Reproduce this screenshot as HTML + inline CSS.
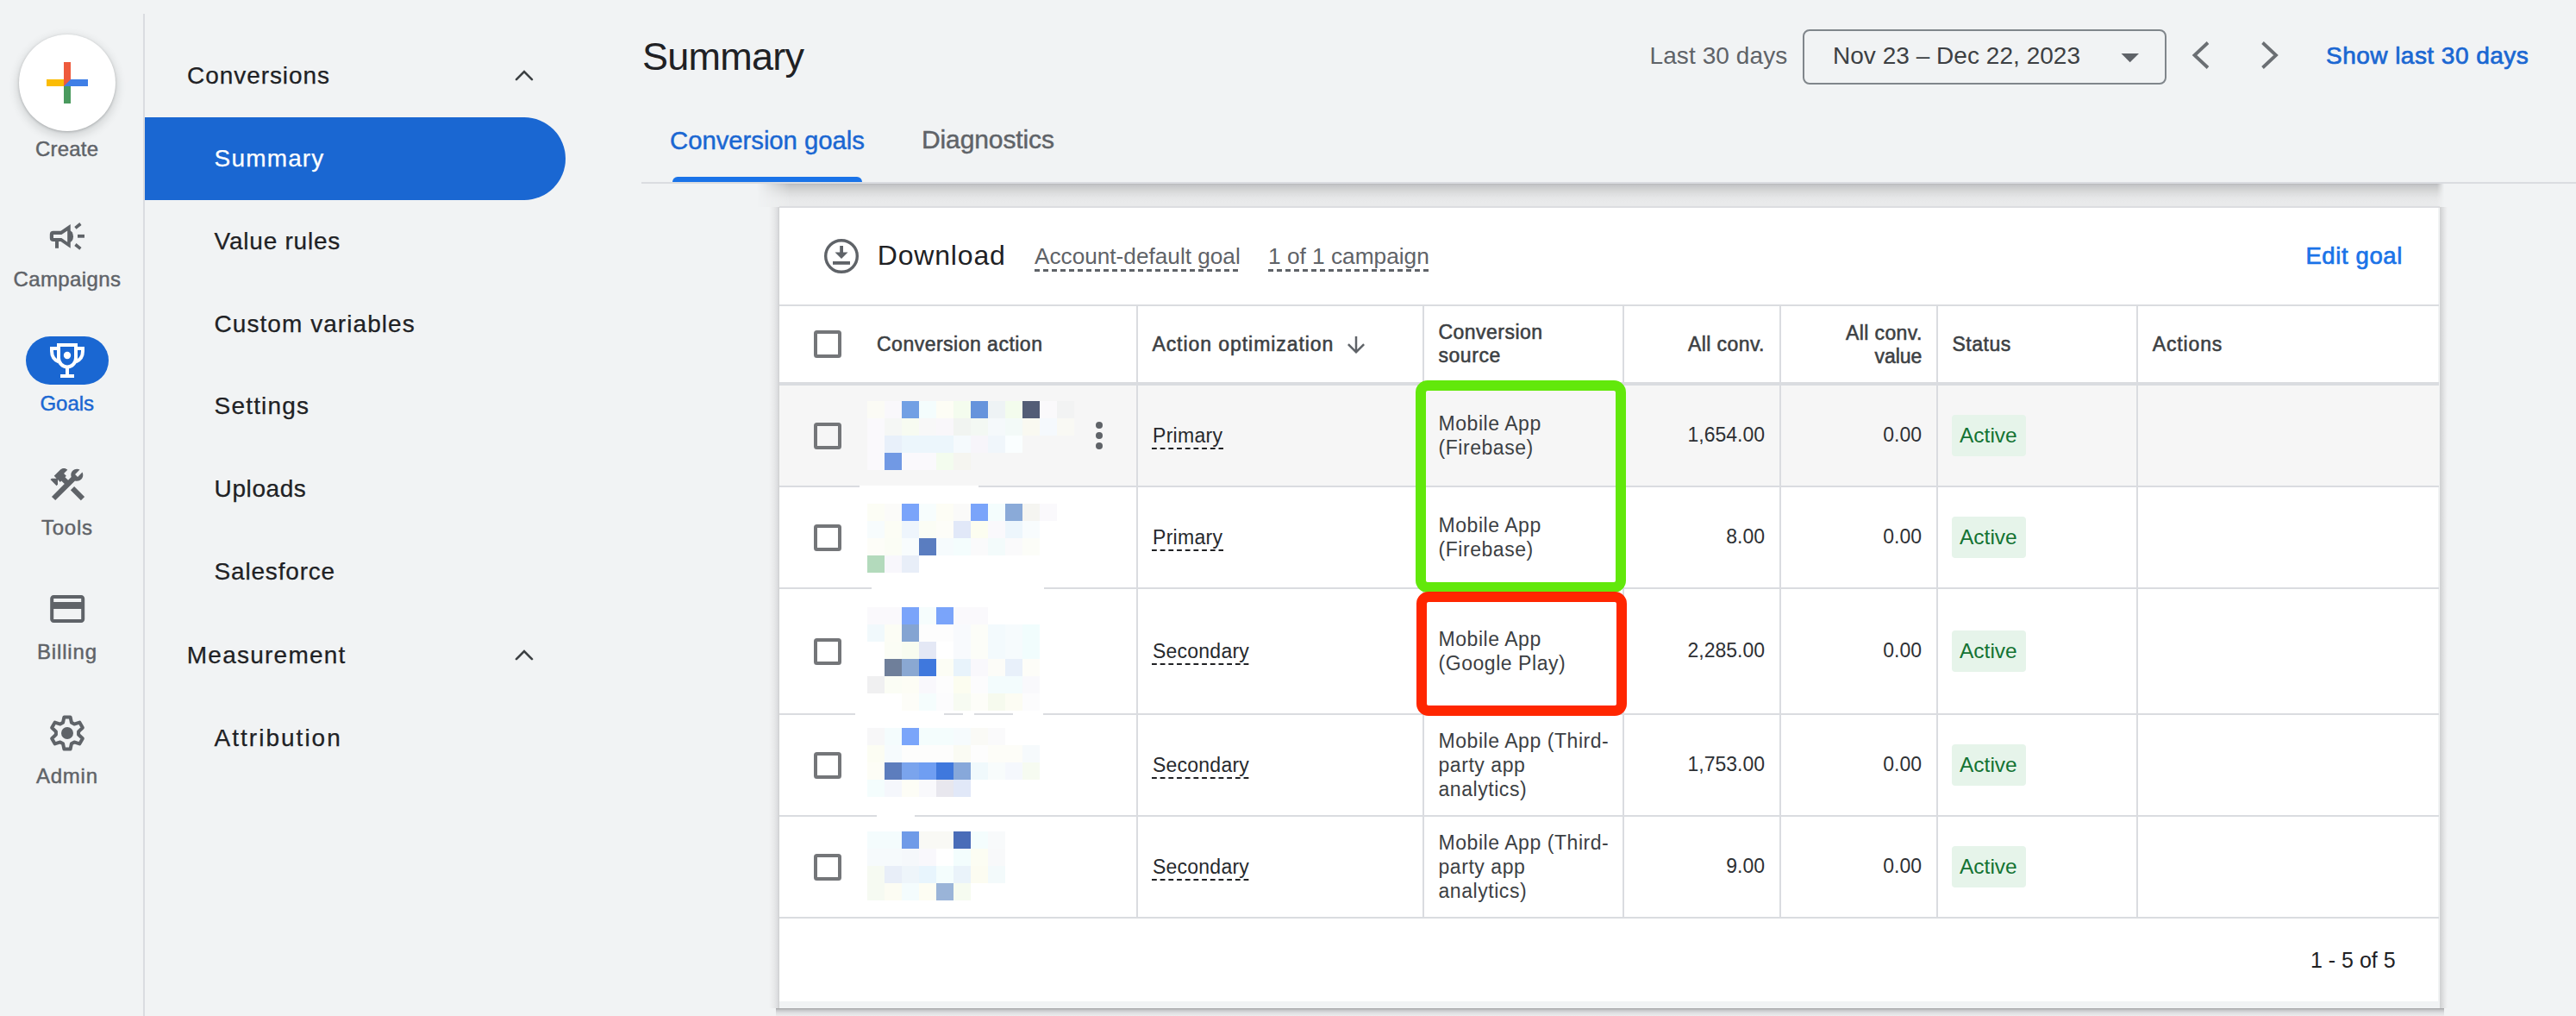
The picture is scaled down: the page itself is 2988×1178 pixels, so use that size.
<!DOCTYPE html>
<html><head><meta charset="utf-8"><style>
html,body{margin:0;padding:0;}
body{width:2988px;height:1178px;overflow:hidden;position:relative;background:#f1f3f4;font-family:"Liberation Sans",sans-serif;color:#202124;}
.t{position:absolute;white-space:nowrap;line-height:1;font-size:calc(var(--fs)*1px);top:calc(var(--b)*1px - var(--fs)*0.8465px);}
.a{position:absolute;}
.rail{color:#5f6368;--fs:24;}
.menu{--fs:28;color:#202124;}
.hd{--fs:23;color:#3c4043;-webkit-text-stroke:0.55px #3c4043;}
.cell{--fs:23;color:#3c4043;}
.num{--fs:23;color:#2d3034;}
.dash{background-image:linear-gradient(to right,#5f6368 60%,transparent 60%);background-size:10px 2px;background-repeat:repeat-x;height:2px;position:absolute;}
.vdiv{position:absolute;width:2px;background:#dadce0;}
.hdiv{position:absolute;height:2px;background:#dadce0;left:904px;width:1925px;}
.cb{position:absolute;left:944px;width:23.8px;height:23.8px;border:4px solid #747679;border-radius:3.5px;}
.chip{position:absolute;left:2264px;width:86px;height:48px;background:#e6f4ea;border-radius:4px;}
.px{position:absolute;width:20px;height:20px;}
.md{-webkit-text-stroke:0.7px currentColor;}
.sm{-webkit-text-stroke:0.45px currentColor;}
.xs{-webkit-text-stroke:0.25px currentColor;}
svg{position:absolute;overflow:visible;}
</style></head><body>
<div class="a" style="left:166px;top:16px;width:2px;height:1162px;background:#dadce0"></div>
<div class="a" style="left:22px;top:40px;width:112px;height:112px;border-radius:50%;background:#fff;box-shadow:0 1px 3px rgba(60,64,67,.3),0 4px 10px 3px rgba(60,64,67,.15)"></div>
<div class="a" style="left:74px;top:72px;width:8px;height:28px;background:#ee5a3c"></div>
<div class="a" style="left:54px;top:92px;width:20px;height:8px;background:#fbbc04"></div>
<div class="a" style="left:74px;top:100px;width:8px;height:20px;background:#4a9a5e"></div>
<div class="a" style="left:74px;top:92px;width:28px;height:8px;background:#3f7fe6;clip-path:polygon(8px 0,100% 0,100% 100%,0 100%)"></div>
<div class="t sm" style="--fs:24;--b:181.5;letter-spacing:0.19px;left:41px;color:#5f6368;">Create</div>
<div class="t sm" style="--fs:24;--b:332.4;letter-spacing:0.39px;left:15.5px;color:#5f6368;">Campaigns</div>
<div class="a" style="left:30px;top:390px;width:96px;height:56px;border-radius:28px;background:#1a67d2"></div>
<div class="t sm" style="--fs:24;--b:476;letter-spacing:-0.05px;left:46.5px;color:#1a67d2;">Goals</div>
<div class="t sm" style="--fs:24;--b:620;letter-spacing:0.74px;left:48px;color:#5f6368;">Tools</div>
<div class="t sm" style="--fs:24;--b:764.4;letter-spacing:0.83px;left:43px;color:#5f6368;">Billing</div>
<div class="t sm" style="--fs:24;--b:908;letter-spacing:0.74px;left:42px;color:#5f6368;">Admin</div>
<svg style="left:0;top:0" width="1" height="1">
<g fill="#5f6368">
 <path fill-rule="evenodd" d="M61.8 267.8 H70.5 L81.75 260.1 V287.8 L70.5 279.9 H61.8 Q57.8 279.9 57.8 275.9 V271.8 Q57.8 267.8 61.8 267.8 Z M62 271.9 V276 H71.4 L78.2 280.8 V267.5 L71.4 271.9 Z"/>
 <rect x="64" y="279" width="4" height="8.8"/>
 <path d="M80.5 267.3 A4.5 6.9 0 0 1 80.5 281.1 Z"/>
 <rect x="90" y="271.9" width="8" height="3.8"/>
 <path d="M87.4 264.3 L93.4 259.5 M87.4 283.5 L93.4 288.3" stroke="#5f6368" stroke-width="3.6" fill="none"/>
 <g transform="translate(54.3 537.8) scale(2)"><path d="M13.783 15.172l2.121-2.121 5.996 5.996-2.121 2.121zM17.5 10c1.93 0 3.5-1.57 3.5-3.5 0-.58-.16-1.120-.41-1.6l-2.7 2.7-1.49-1.490 2.7-2.7c-.48-.25-1.02-.41-1.6-.41C15.57 3 14 4.57 14 6.5c0 .41.08.8.21 1.160l-1.85 1.85-1.78-1.78.71-.71-1.41-1.41L12 3.490c-1.17-1.17-3.07-1.17-4.24 0L4.22 7.030l1.41 1.41H2.81l-.71.71 3.54 3.54.71-.71V9.150l1.41 1.41.71-.71 1.78 1.78-7.41 7.41 2.12 2.12L16.34 9.790c.36.13.75.21 1.16.21z"/></g>
 <g transform="translate(54.2 682) scale(2)"><path d="M20 4H4c-1.11 0-1.99.89-1.99 2L2 18c0 1.11.89 2 2 2h16c1.11 0 2-.89 2-2V6c0-1.11-.89-2-2-2zm0 14H4v-6h16v6zm0-10H4V6h16v2z"/></g>
 <circle cx="78" cy="850" r="7"/>
</g>
<path d="M73.06 837.76 L74.39 831.45 L81.61 831.45 L82.94 837.76 L86.13 839.60 L92.26 837.60 L95.87 843.85 L91.07 848.16 L91.07 851.84 L95.87 856.15 L92.26 862.40 L86.13 860.40 L82.94 862.24 L81.61 868.55 L74.39 868.55 L73.06 862.24 L69.87 860.40 L63.74 862.40 L60.13 856.15 L64.93 851.84 L64.93 848.16 L60.13 843.85 L63.74 837.60 L69.87 839.60 Z" fill="none" stroke="#5f6368" stroke-width="4" stroke-linejoin="round"/>
<g fill="none" stroke="#fff" stroke-width="4">
 <path d="M68 400 H88 V415 A10 10.6 0 0 1 68 415 Z"/>
 <path d="M68 404 H60 V407 Q60 416 68 419.5"/>
 <path d="M88 404 H96 V407 Q96 416 88 419.5"/>
</g>
<g fill="#fff"><rect x="76" y="426" width="4" height="9"/><rect x="70" y="434" width="16" height="4"/><circle cx="78" cy="412" r="4.2"/></g>
<g fill="none" stroke="#3c4043" stroke-width="2.6" stroke-linecap="round">
 <path d="M599 92.2 L608 83.2 L617 92.2"/>
 <path d="M599 764.2 L608 755.2 L617 764.2"/>
</g>
<g fill="none" stroke="#6b6f73" stroke-width="3.8">
 <path d="M2561 49.5 L2545.5 64 L2561 78.5"/>
 <path d="M2624.5 49.5 L2640 64 L2624.5 78.5"/>
</g>
<path d="M2460.5 62 L2481 62 L2470.7 72.3 Z" fill="#5f6368"/>
</svg>
<div class="t xs" style="--fs:28;--b:97.5;letter-spacing:0.94px;left:217px;color:#202124;">Conversions</div>
<div class="a" style="left:168px;top:136px;width:488px;height:96px;background:#1a67d2;border-radius:0 48px 48px 0"></div>
<div class="t xs" style="--fs:28;--b:193.6;letter-spacing:1.16px;left:248.6px;color:#fff;">Summary</div>
<div class="t xs" style="--fs:28;--b:289.5;letter-spacing:0.77px;left:248.6px;color:#202124;">Value rules</div>
<div class="t xs" style="--fs:28;--b:385.5;letter-spacing:1.05px;left:248.6px;color:#202124;">Custom variables</div>
<div class="t xs" style="--fs:28;--b:481;letter-spacing:1.18px;left:248.6px;color:#202124;">Settings</div>
<div class="t xs" style="--fs:28;--b:577;letter-spacing:0.59px;left:248.6px;color:#202124;">Uploads</div>
<div class="t xs" style="--fs:28;--b:673;letter-spacing:0.81px;left:248.6px;color:#202124;">Salesforce</div>
<div class="t xs" style="--fs:28;--b:866;letter-spacing:2.01px;left:248.6px;color:#202124;">Attribution</div>
<div class="t xs" style="--fs:28;--b:769.5;letter-spacing:1.24px;left:216.8px;color:#202124;">Measurement</div>
<div class="t " style="--fs:45;--b:81.4;letter-spacing:-0.75px;left:745px;color:#202124;">Summary</div>
<div class="t " style="--fs:28;--b:75.2;letter-spacing:0.09px;left:1913.5px;color:#5f6368;">Last 30 days</div>
<div class="a" style="left:2091px;top:34px;width:418px;height:60px;border:2px solid #80868b;border-radius:8px"></div>
<div class="t " style="--fs:28;--b:75.2;letter-spacing:0.03px;left:2126px;color:#3c4043;">Nov 23 – Dec 22, 2023</div>
<div class="t md" style="--fs:28;--b:75;letter-spacing:0.47px;left:2698px;color:#1a67d2;">Show last 30 days</div>
<div class="t sm" style="--fs:29.3;--b:172.7;letter-spacing:-0.03px;left:777px;color:#1a67d2;">Conversion goals</div>
<div class="t sm" style="--fs:30;--b:172.7;letter-spacing:-0.11px;left:1069px;color:#5f6368;">Diagnostics</div>
<div class="a" style="left:780px;top:205px;width:220px;height:6px;background:#1a73e8;border-radius:6px 6px 0 0"></div>
<div class="a" style="left:744px;top:211px;width:2244px;height:2px;background:#dadce0"></div>
<div class="a" style="left:878px;top:213px;width:1957px;height:27px;background:linear-gradient(#b8b9bb 0px,#c5c6c8 2px,#d3d4d4 7px,#dedfe0 12px,#e6e7e8 17px,#e9eaeb 22px,#e9eaeb 27px);-webkit-mask-image:linear-gradient(to right,transparent 0,#000 38px,#000 calc(100% - 8px),transparent 100%)"></div>
<div class="a" style="left:904px;top:239px;width:1926px;height:2px;background:#dcdde0"></div>
<div class="a" style="left:904px;top:241px;width:1926px;height:928px;background:#f1f3f4"></div>
<div class="a" style="left:904px;top:241px;width:1924px;height:920px;background:#fff"></div>
<div class="a" style="left:892px;top:240px;width:12px;height:929px;background:linear-gradient(to right,rgba(241,243,244,0),#e8e9ea 6px,#dcdddf 10px,#cdcecf 12px)"></div>
<div class="a" style="left:2830px;top:240px;width:9px;height:929px;background:linear-gradient(to right,#cfd0d1,#e8e9ea 6px,rgba(241,243,244,0) 9px)"></div>
<div class="a" style="left:900px;top:1169px;width:1935px;height:9px;background:linear-gradient(#a0a1a3,#c4c5c7 2px,#dcdde0 5px,#e8e9ea 8px,#ebeced 9px)"></div>
<svg style="left:954px;top:275px" width="44" height="44" viewBox="0 0 44 44">
<circle cx="22" cy="22" r="18.3" fill="none" stroke="#5f6368" stroke-width="3.4"/>
<rect x="20.2" y="10" width="3.8" height="12" fill="#5f6368"/>
<path d="M14.5 17.5 L22 25 L29.5 17.5 Z" fill="#5f6368"/>
<rect x="12" y="28" width="20" height="3.8" fill="#5f6368"/>
</svg>
<div class="t " style="--fs:32;--b:306.8;letter-spacing:0.81px;left:1017.8px;color:#202124;">Download</div>
<div class="t " style="--fs:26.2;--b:306;letter-spacing:-0.00px;left:1200px;color:#5f6368;">Account-default goal</div>
<div class="dash" style="left:1200px;top:312.2px;width:240px;height:2.6px;background-size:10px 2.6px"></div>
<div class="t " style="--fs:26.3;--b:306;letter-spacing:-0.02px;left:1471px;color:#5f6368;">1 of 1 campaign</div>
<div class="dash" style="left:1471px;top:312.2px;width:188px;height:2.6px;background-size:10px 2.6px"></div>
<div class="t md" style="--fs:27.5;--b:306;letter-spacing:0.62px;left:2674.4px;color:#1a73e8;">Edit goal</div>
<div class="hdiv" style="top:353px"></div>
<div class="cb" style="top:383px"></div>
<div class="t hd" style="--fs:23;--b:407.2;letter-spacing:0.49px;left:1017px;">Conversion action</div>
<div class="t hd" style="--fs:23;--b:407;letter-spacing:0.94px;left:1336.4px;">Action optimization</div>
<svg style="left:1557.5px;top:385px" width="30" height="30" viewBox="0 0 24 24"><path d="M20 12l-1.41-1.41L13 16.17V4h-2v12.17l-5.58-5.59L4 12l8 8 8-8z" fill="#5f6368"/></svg>
<div class="t hd" style="--fs:23;--b:393;letter-spacing:0.49px;left:1668.4px;">Conversion</div>
<div class="t hd" style="--fs:23;--b:420.4;letter-spacing:0.59px;left:1668.4px;">source</div>
<div class="t hd" style="--fs:23;--b:407;letter-spacing:0.41px;right:941.09px;">All conv.</div>
<div class="t hd" style="--fs:23;--b:394;letter-spacing:0.41px;right:758.19px;">All conv.</div>
<div class="t hd" style="--fs:23;--b:421;letter-spacing:0.01px;right:758.59px;">value</div>
<div class="t hd" style="--fs:23;--b:407.5;letter-spacing:0.52px;left:2264.4px;">Status</div>
<div class="t hd" style="--fs:23;--b:407.5;letter-spacing:0.84px;left:2496.8px;">Actions</div>
<div class="hdiv" style="top:443px;height:4px"></div>
<div class="a" style="left:904px;top:447px;width:1925px;height:116px;background:#f6f6f6"></div>
<div class="hdiv" style="top:563px"></div>
<div class="cb" style="top:489.5px"></div>
<div class="t " style="--fs:23;--b:513.0;letter-spacing:0.29px;left:1337px;color:#26292d;">Primary</div>
<div class="dash" style="left:1336px;top:519.0px;width:83px;background-image:linear-gradient(to right,#202124 60%,transparent 60%);background-size:9.7px 2px"></div>
<div class="t " style="--fs:23;--b:499.4;left:1668.5px;color:#3c4043;letter-spacing:0.55px;">Mobile App</div>
<div class="t " style="--fs:23;--b:527.4;left:1668.5px;color:#3c4043;letter-spacing:0.55px;">(Firebase)</div>
<div class="t num" style="--b:512.8;right:941px">1,654.00</div>
<div class="t num" style="--b:512.8;right:759px">0.00</div>
<div class="chip" style="top:481.0px"></div>
<div class="t" style="--fs:24.5;--b:513.5;left:2273px;color:#137333">Active</div>
<div class="hdiv" style="top:681px"></div>
<div class="cb" style="top:607.5px"></div>
<div class="t " style="--fs:23;--b:631.0;letter-spacing:0.29px;left:1337px;color:#26292d;">Primary</div>
<div class="dash" style="left:1336px;top:637.0px;width:83px;background-image:linear-gradient(to right,#202124 60%,transparent 60%);background-size:9.7px 2px"></div>
<div class="t " style="--fs:23;--b:617.4;left:1668.5px;color:#3c4043;letter-spacing:0.55px;">Mobile App</div>
<div class="t " style="--fs:23;--b:645.4;left:1668.5px;color:#3c4043;letter-spacing:0.55px;">(Firebase)</div>
<div class="t num" style="--b:630.8;right:941px">8.00</div>
<div class="t num" style="--b:630.8;right:759px">0.00</div>
<div class="chip" style="top:599.0px"></div>
<div class="t" style="--fs:24.5;--b:631.5;left:2273px;color:#137333">Active</div>
<div class="hdiv" style="top:827px"></div>
<div class="cb" style="top:739.5px"></div>
<div class="t " style="--fs:23;--b:763.0;letter-spacing:0.23px;left:1337px;color:#26292d;">Secondary</div>
<div class="dash" style="left:1336px;top:769.0px;width:113px;background-image:linear-gradient(to right,#202124 60%,transparent 60%);background-size:9.7px 2px"></div>
<div class="t " style="--fs:23;--b:749.4;left:1668.5px;color:#3c4043;letter-spacing:0.55px;">Mobile App</div>
<div class="t " style="--fs:23;--b:777.4;left:1668.5px;color:#3c4043;letter-spacing:0.55px;">(Google Play)</div>
<div class="t num" style="--b:762.8;right:941px">2,285.00</div>
<div class="t num" style="--b:762.8;right:759px">0.00</div>
<div class="chip" style="top:731.0px"></div>
<div class="t" style="--fs:24.5;--b:763.5;left:2273px;color:#137333">Active</div>
<div class="hdiv" style="top:945px"></div>
<div class="cb" style="top:871.5px"></div>
<div class="t " style="--fs:23;--b:895.0;letter-spacing:0.23px;left:1337px;color:#26292d;">Secondary</div>
<div class="dash" style="left:1336px;top:901.0px;width:113px;background-image:linear-gradient(to right,#202124 60%,transparent 60%);background-size:9.7px 2px"></div>
<div class="t " style="--fs:23;--b:867.4;left:1668.5px;color:#3c4043;letter-spacing:0.55px;">Mobile App (Third-</div>
<div class="t " style="--fs:23;--b:895.4;left:1668.5px;color:#3c4043;letter-spacing:0.55px;">party app</div>
<div class="t " style="--fs:23;--b:923.4;left:1668.5px;color:#3c4043;letter-spacing:0.55px;">analytics)</div>
<div class="t num" style="--b:894.8;right:941px">1,753.00</div>
<div class="t num" style="--b:894.8;right:759px">0.00</div>
<div class="chip" style="top:863.0px"></div>
<div class="t" style="--fs:24.5;--b:895.5;left:2273px;color:#137333">Active</div>
<div class="hdiv" style="top:1063px"></div>
<div class="cb" style="top:989.5px"></div>
<div class="t " style="--fs:23;--b:1013.0;letter-spacing:0.23px;left:1337px;color:#26292d;">Secondary</div>
<div class="dash" style="left:1336px;top:1019.0px;width:113px;background-image:linear-gradient(to right,#202124 60%,transparent 60%);background-size:9.7px 2px"></div>
<div class="t " style="--fs:23;--b:985.4;left:1668.5px;color:#3c4043;letter-spacing:0.55px;">Mobile App (Third-</div>
<div class="t " style="--fs:23;--b:1013.4;left:1668.5px;color:#3c4043;letter-spacing:0.55px;">party app</div>
<div class="t " style="--fs:23;--b:1041.4;left:1668.5px;color:#3c4043;letter-spacing:0.55px;">analytics)</div>
<div class="t num" style="--b:1012.8;right:941px">9.00</div>
<div class="t num" style="--b:1012.8;right:759px">0.00</div>
<div class="chip" style="top:981.0px"></div>
<div class="t" style="--fs:24.5;--b:1013.5;left:2273px;color:#137333">Active</div>
<div class="a" style="left:997px;top:563px;width:138px;height:2px;background:#fff"></div>
<div class="a" style="left:1011px;top:681px;width:200px;height:2px;background:#fff"></div>
<div class="a" style="left:992px;top:827px;width:103px;height:2px;background:#fff"></div>
<div class="a" style="left:1117px;top:827px;width:13px;height:2px;background:#fff"></div>
<div class="a" style="left:1175px;top:827px;width:35px;height:2px;background:#fff"></div>
<div class="a" style="left:1017px;top:945px;width:44px;height:2px;background:#fff"></div>
<div class="vdiv" style="left:1318px;top:355px;height:708px"></div>
<div class="vdiv" style="left:1650px;top:355px;height:708px"></div>
<div class="vdiv" style="left:1882px;top:355px;height:708px"></div>
<div class="vdiv" style="left:2064px;top:355px;height:708px"></div>
<div class="vdiv" style="left:2246px;top:355px;height:708px"></div>
<div class="vdiv" style="left:2478px;top:355px;height:708px"></div>
<div class="px" style="left:1006px;top:464.5px;background:rgb(251,251,245)"></div>
<div class="px" style="left:1026px;top:464.5px;background:rgb(249,248,251)"></div>
<div class="px" style="left:1046px;top:464.5px;background:rgb(114,160,228)"></div>
<div class="px" style="left:1066px;top:464.5px;background:rgb(244,253,253)"></div>
<div class="px" style="left:1086px;top:464.5px;background:rgb(253,253,245)"></div>
<div class="px" style="left:1106px;top:464.5px;background:rgb(244,252,238)"></div>
<div class="px" style="left:1126px;top:464.5px;background:rgb(102,148,220)"></div>
<div class="px" style="left:1146px;top:464.5px;background:rgb(238,243,245)"></div>
<div class="px" style="left:1166px;top:464.5px;background:rgb(243,252,237)"></div>
<div class="px" style="left:1186px;top:464.5px;background:rgb(83,93,118)"></div>
<div class="px" style="left:1206px;top:464.5px;background:rgb(250,249,251)"></div>
<div class="px" style="left:1226px;top:464.5px;background:rgb(242,243,243)"></div>
<div class="px" style="left:1006px;top:484.5px;background:rgb(250,249,252)"></div>
<div class="px" style="left:1026px;top:484.5px;background:rgb(245,247,245)"></div>
<div class="px" style="left:1046px;top:484.5px;background:rgb(247,251,241)"></div>
<div class="px" style="left:1066px;top:484.5px;background:rgb(248,248,248)"></div>
<div class="px" style="left:1086px;top:484.5px;background:rgb(249,247,250)"></div>
<div class="px" style="left:1106px;top:484.5px;background:rgb(241,244,241)"></div>
<div class="px" style="left:1126px;top:484.5px;background:rgb(243,248,243)"></div>
<div class="px" style="left:1146px;top:484.5px;background:rgb(245,249,251)"></div>
<div class="px" style="left:1166px;top:484.5px;background:rgb(243,250,248)"></div>
<div class="px" style="left:1186px;top:484.5px;background:rgb(249,249,241)"></div>
<div class="px" style="left:1206px;top:484.5px;background:rgb(245,249,253)"></div>
<div class="px" style="left:1226px;top:484.5px;background:rgb(249,249,244)"></div>
<div class="px" style="left:1006px;top:504.5px;background:rgb(250,249,252)"></div>
<div class="px" style="left:1026px;top:504.5px;background:rgb(232,240,250)"></div>
<div class="px" style="left:1046px;top:504.5px;background:rgb(236,246,252)"></div>
<div class="px" style="left:1066px;top:504.5px;background:rgb(236,246,252)"></div>
<div class="px" style="left:1086px;top:504.5px;background:rgb(236,246,252)"></div>
<div class="px" style="left:1106px;top:504.5px;background:rgb(245,250,253)"></div>
<div class="px" style="left:1126px;top:504.5px;background:rgb(247,245,250)"></div>
<div class="px" style="left:1146px;top:504.5px;background:rgb(240,246,251)"></div>
<div class="px" style="left:1166px;top:504.5px;background:rgb(250,254,255)"></div>
<div class="px" style="left:1006px;top:524.5px;background:rgb(250,249,252)"></div>
<div class="px" style="left:1026px;top:524.5px;background:rgb(113,153,228)"></div>
<div class="px" style="left:1046px;top:524.5px;background:rgb(250,249,252)"></div>
<div class="px" style="left:1066px;top:524.5px;background:rgb(250,249,252)"></div>
<div class="px" style="left:1086px;top:524.5px;background:rgb(243,252,238)"></div>
<div class="px" style="left:1106px;top:524.5px;background:rgb(245,245,240)"></div>
<div class="px" style="left:1006px;top:584px;background:rgb(252,253,245)"></div>
<div class="px" style="left:1026px;top:584px;background:rgb(251,251,249)"></div>
<div class="px" style="left:1046px;top:584px;background:rgb(122,164,250)"></div>
<div class="px" style="left:1066px;top:584px;background:rgb(247,253,253)"></div>
<div class="px" style="left:1086px;top:584px;background:rgb(253,253,245)"></div>
<div class="px" style="left:1106px;top:584px;background:rgb(250,250,249)"></div>
<div class="px" style="left:1126px;top:584px;background:rgb(122,164,250)"></div>
<div class="px" style="left:1146px;top:584px;background:rgb(244,253,253)"></div>
<div class="px" style="left:1166px;top:584px;background:rgb(138,170,216)"></div>
<div class="px" style="left:1186px;top:584px;background:rgb(245,245,241)"></div>
<div class="px" style="left:1206px;top:584px;background:rgb(250,249,252)"></div>
<div class="px" style="left:1006px;top:604px;background:rgb(247,252,253)"></div>
<div class="px" style="left:1026px;top:604px;background:rgb(252,253,245)"></div>
<div class="px" style="left:1046px;top:604px;background:rgb(238,245,252)"></div>
<div class="px" style="left:1066px;top:604px;background:rgb(251,253,245)"></div>
<div class="px" style="left:1086px;top:604px;background:rgb(253,253,248)"></div>
<div class="px" style="left:1106px;top:604px;background:rgb(225,232,248)"></div>
<div class="px" style="left:1126px;top:604px;background:rgb(252,253,240)"></div>
<div class="px" style="left:1146px;top:604px;background:rgb(250,249,252)"></div>
<div class="px" style="left:1166px;top:604px;background:rgb(237,246,252)"></div>
<div class="px" style="left:1186px;top:604px;background:rgb(248,252,253)"></div>
<div class="px" style="left:1006px;top:624px;background:rgb(253,253,248)"></div>
<div class="px" style="left:1026px;top:624px;background:rgb(251,253,245)"></div>
<div class="px" style="left:1046px;top:624px;background:rgb(248,252,253)"></div>
<div class="px" style="left:1066px;top:624px;background:rgb(90,125,192)"></div>
<div class="px" style="left:1086px;top:624px;background:rgb(246,251,253)"></div>
<div class="px" style="left:1106px;top:624px;background:rgb(244,253,253)"></div>
<div class="px" style="left:1126px;top:624px;background:rgb(250,250,251)"></div>
<div class="px" style="left:1146px;top:624px;background:rgb(243,251,251)"></div>
<div class="px" style="left:1166px;top:624px;background:rgb(250,250,251)"></div>
<div class="px" style="left:1186px;top:624px;background:rgb(252,253,248)"></div>
<div class="px" style="left:1006px;top:644px;background:rgb(179,218,188)"></div>
<div class="px" style="left:1026px;top:644px;background:rgb(248,247,252)"></div>
<div class="px" style="left:1046px;top:644px;background:rgb(232,238,248)"></div>
<div class="px" style="left:1006px;top:704px;background:rgb(250,249,252)"></div>
<div class="px" style="left:1026px;top:704px;background:rgb(250,249,252)"></div>
<div class="px" style="left:1046px;top:704px;background:rgb(122,164,250)"></div>
<div class="px" style="left:1066px;top:704px;background:rgb(246,253,253)"></div>
<div class="px" style="left:1086px;top:704px;background:rgb(122,164,250)"></div>
<div class="px" style="left:1106px;top:704px;background:rgb(250,249,252)"></div>
<div class="px" style="left:1126px;top:704px;background:rgb(250,249,252)"></div>
<div class="px" style="left:1006px;top:724px;background:rgb(241,249,252)"></div>
<div class="px" style="left:1026px;top:724px;background:rgb(252,253,245)"></div>
<div class="px" style="left:1046px;top:724px;background:rgb(132,164,210)"></div>
<div class="px" style="left:1066px;top:724px;background:rgb(253,253,253)"></div>
<div class="px" style="left:1086px;top:724px;background:rgb(253,253,253)"></div>
<div class="px" style="left:1106px;top:724px;background:rgb(248,250,253)"></div>
<div class="px" style="left:1126px;top:724px;background:rgb(252,253,248)"></div>
<div class="px" style="left:1146px;top:724px;background:rgb(243,250,253)"></div>
<div class="px" style="left:1166px;top:724px;background:rgb(246,251,253)"></div>
<div class="px" style="left:1186px;top:724px;background:rgb(241,253,253)"></div>
<div class="px" style="left:1026px;top:744px;background:rgb(251,253,245)"></div>
<div class="px" style="left:1046px;top:744px;background:rgb(248,252,240)"></div>
<div class="px" style="left:1066px;top:744px;background:rgb(228,232,245)"></div>
<div class="px" style="left:1106px;top:744px;background:rgb(248,250,253)"></div>
<div class="px" style="left:1126px;top:744px;background:rgb(252,253,248)"></div>
<div class="px" style="left:1146px;top:744px;background:rgb(243,250,253)"></div>
<div class="px" style="left:1166px;top:744px;background:rgb(246,251,253)"></div>
<div class="px" style="left:1186px;top:744px;background:rgb(241,253,253)"></div>
<div class="px" style="left:1026px;top:764px;background:rgb(111,127,154)"></div>
<div class="px" style="left:1046px;top:764px;background:rgb(138,168,210)"></div>
<div class="px" style="left:1066px;top:764px;background:rgb(63,120,221)"></div>
<div class="px" style="left:1086px;top:764px;background:rgb(252,253,245)"></div>
<div class="px" style="left:1106px;top:764px;background:rgb(232,243,251)"></div>
<div class="px" style="left:1126px;top:764px;background:rgb(249,248,252)"></div>
<div class="px" style="left:1146px;top:764px;background:rgb(252,252,248)"></div>
<div class="px" style="left:1166px;top:764px;background:rgb(232,240,250)"></div>
<div class="px" style="left:1186px;top:764px;background:rgb(253,253,248)"></div>
<div class="px" style="left:1006px;top:784px;background:rgb(240,240,241)"></div>
<div class="px" style="left:1026px;top:784px;background:rgb(251,253,245)"></div>
<div class="px" style="left:1046px;top:784px;background:rgb(253,253,245)"></div>
<div class="px" style="left:1066px;top:784px;background:rgb(249,248,252)"></div>
<div class="px" style="left:1086px;top:784px;background:rgb(253,253,253)"></div>
<div class="px" style="left:1106px;top:784px;background:rgb(252,253,240)"></div>
<div class="px" style="left:1126px;top:784px;background:rgb(252,252,253)"></div>
<div class="px" style="left:1146px;top:784px;background:rgb(243,252,253)"></div>
<div class="px" style="left:1166px;top:784px;background:rgb(243,252,253)"></div>
<div class="px" style="left:1186px;top:784px;background:rgb(249,249,252)"></div>
<div class="px" style="left:1046px;top:804px;background:rgb(253,253,248)"></div>
<div class="px" style="left:1066px;top:804px;background:rgb(245,253,253)"></div>
<div class="px" style="left:1086px;top:804px;background:rgb(252,252,253)"></div>
<div class="px" style="left:1106px;top:804px;background:rgb(247,251,242)"></div>
<div class="px" style="left:1126px;top:804px;background:rgb(253,253,248)"></div>
<div class="px" style="left:1146px;top:804px;background:rgb(246,250,238)"></div>
<div class="px" style="left:1166px;top:804px;background:rgb(252,252,243)"></div>
<div class="px" style="left:1186px;top:804px;background:rgb(252,252,253)"></div>
<div class="px" style="left:1006px;top:844px;background:rgb(247,247,248)"></div>
<div class="px" style="left:1026px;top:844px;background:rgb(244,252,253)"></div>
<div class="px" style="left:1046px;top:844px;background:rgb(122,165,250)"></div>
<div class="px" style="left:1066px;top:844px;background:rgb(244,253,253)"></div>
<div class="px" style="left:1086px;top:844px;background:rgb(244,253,253)"></div>
<div class="px" style="left:1106px;top:844px;background:rgb(246,251,253)"></div>
<div class="px" style="left:1126px;top:844px;background:rgb(250,250,246)"></div>
<div class="px" style="left:1146px;top:844px;background:rgb(250,250,251)"></div>
<div class="px" style="left:1006px;top:864px;background:rgb(252,253,243)"></div>
<div class="px" style="left:1026px;top:864px;background:rgb(246,251,253)"></div>
<div class="px" style="left:1046px;top:864px;background:rgb(253,253,252)"></div>
<div class="px" style="left:1066px;top:864px;background:rgb(253,253,252)"></div>
<div class="px" style="left:1086px;top:864px;background:rgb(253,253,252)"></div>
<div class="px" style="left:1106px;top:864px;background:rgb(250,251,243)"></div>
<div class="px" style="left:1126px;top:864px;background:rgb(253,253,253)"></div>
<div class="px" style="left:1146px;top:864px;background:rgb(253,253,248)"></div>
<div class="px" style="left:1166px;top:864px;background:rgb(253,253,248)"></div>
<div class="px" style="left:1186px;top:864px;background:rgb(246,250,252)"></div>
<div class="px" style="left:1006px;top:884px;background:rgb(253,253,246)"></div>
<div class="px" style="left:1026px;top:884px;background:rgb(93,125,189)"></div>
<div class="px" style="left:1046px;top:884px;background:rgb(122,164,237)"></div>
<div class="px" style="left:1066px;top:884px;background:rgb(111,158,242)"></div>
<div class="px" style="left:1086px;top:884px;background:rgb(63,120,221)"></div>
<div class="px" style="left:1106px;top:884px;background:rgb(135,168,218)"></div>
<div class="px" style="left:1126px;top:884px;background:rgb(240,249,252)"></div>
<div class="px" style="left:1146px;top:884px;background:rgb(248,252,252)"></div>
<div class="px" style="left:1166px;top:884px;background:rgb(245,248,253)"></div>
<div class="px" style="left:1186px;top:884px;background:rgb(246,251,241)"></div>
<div class="px" style="left:1006px;top:904px;background:rgb(244,253,253)"></div>
<div class="px" style="left:1026px;top:904px;background:rgb(245,247,252)"></div>
<div class="px" style="left:1046px;top:904px;background:rgb(253,253,246)"></div>
<div class="px" style="left:1066px;top:904px;background:rgb(249,249,252)"></div>
<div class="px" style="left:1086px;top:904px;background:rgb(232,231,238)"></div>
<div class="px" style="left:1106px;top:904px;background:rgb(225,232,248)"></div>
<div class="px" style="left:1006px;top:964px;background:rgb(244,252,253)"></div>
<div class="px" style="left:1026px;top:964px;background:rgb(244,252,253)"></div>
<div class="px" style="left:1046px;top:964px;background:rgb(111,155,232)"></div>
<div class="px" style="left:1066px;top:964px;background:rgb(249,249,245)"></div>
<div class="px" style="left:1086px;top:964px;background:rgb(249,249,245)"></div>
<div class="px" style="left:1106px;top:964px;background:rgb(74,108,184)"></div>
<div class="px" style="left:1126px;top:964px;background:rgb(244,253,253)"></div>
<div class="px" style="left:1146px;top:964px;background:rgb(248,250,251)"></div>
<div class="px" style="left:1006px;top:984px;background:rgb(246,250,252)"></div>
<div class="px" style="left:1026px;top:984px;background:rgb(246,250,252)"></div>
<div class="px" style="left:1046px;top:984px;background:rgb(245,248,251)"></div>
<div class="px" style="left:1066px;top:984px;background:rgb(249,248,252)"></div>
<div class="px" style="left:1106px;top:984px;background:rgb(243,253,253)"></div>
<div class="px" style="left:1126px;top:984px;background:rgb(252,253,243)"></div>
<div class="px" style="left:1146px;top:984px;background:rgb(248,249,250)"></div>
<div class="px" style="left:1006px;top:1004px;background:rgb(246,250,242)"></div>
<div class="px" style="left:1026px;top:1004px;background:rgb(232,238,248)"></div>
<div class="px" style="left:1046px;top:1004px;background:rgb(238,245,250)"></div>
<div class="px" style="left:1066px;top:1004px;background:rgb(232,245,253)"></div>
<div class="px" style="left:1086px;top:1004px;background:rgb(244,253,253)"></div>
<div class="px" style="left:1106px;top:1004px;background:rgb(234,243,250)"></div>
<div class="px" style="left:1126px;top:1004px;background:rgb(252,252,241)"></div>
<div class="px" style="left:1146px;top:1004px;background:rgb(243,250,251)"></div>
<div class="px" style="left:1006px;top:1024px;background:rgb(246,250,242)"></div>
<div class="px" style="left:1026px;top:1024px;background:rgb(252,252,243)"></div>
<div class="px" style="left:1046px;top:1024px;background:rgb(244,252,253)"></div>
<div class="px" style="left:1066px;top:1024px;background:rgb(253,253,243)"></div>
<div class="px" style="left:1086px;top:1024px;background:rgb(154,180,216)"></div>
<div class="px" style="left:1106px;top:1024px;background:rgb(246,251,240)"></div>
<div class="a" style="left:1271px;top:489px;width:8px;height:8px;border-radius:50%;background:#5f6368"></div>
<div class="a" style="left:1271px;top:501px;width:8px;height:8px;border-radius:50%;background:#5f6368"></div>
<div class="a" style="left:1271px;top:513px;width:8px;height:8px;border-radius:50%;background:#5f6368"></div>
<div class="t" style="--fs:25;--b:1122.2;left:2680px;color:#202124">1 - 5 of 5</div>
<div class="a" style="left:1642px;top:440.5px;width:220px;height:222.5px;border:12px solid #62e80b;border-radius:14px"></div>
<div class="a" style="left:1643px;top:686px;width:220px;height:120px;border:12px solid #ff2600;border-radius:14px"></div>
</body></html>
